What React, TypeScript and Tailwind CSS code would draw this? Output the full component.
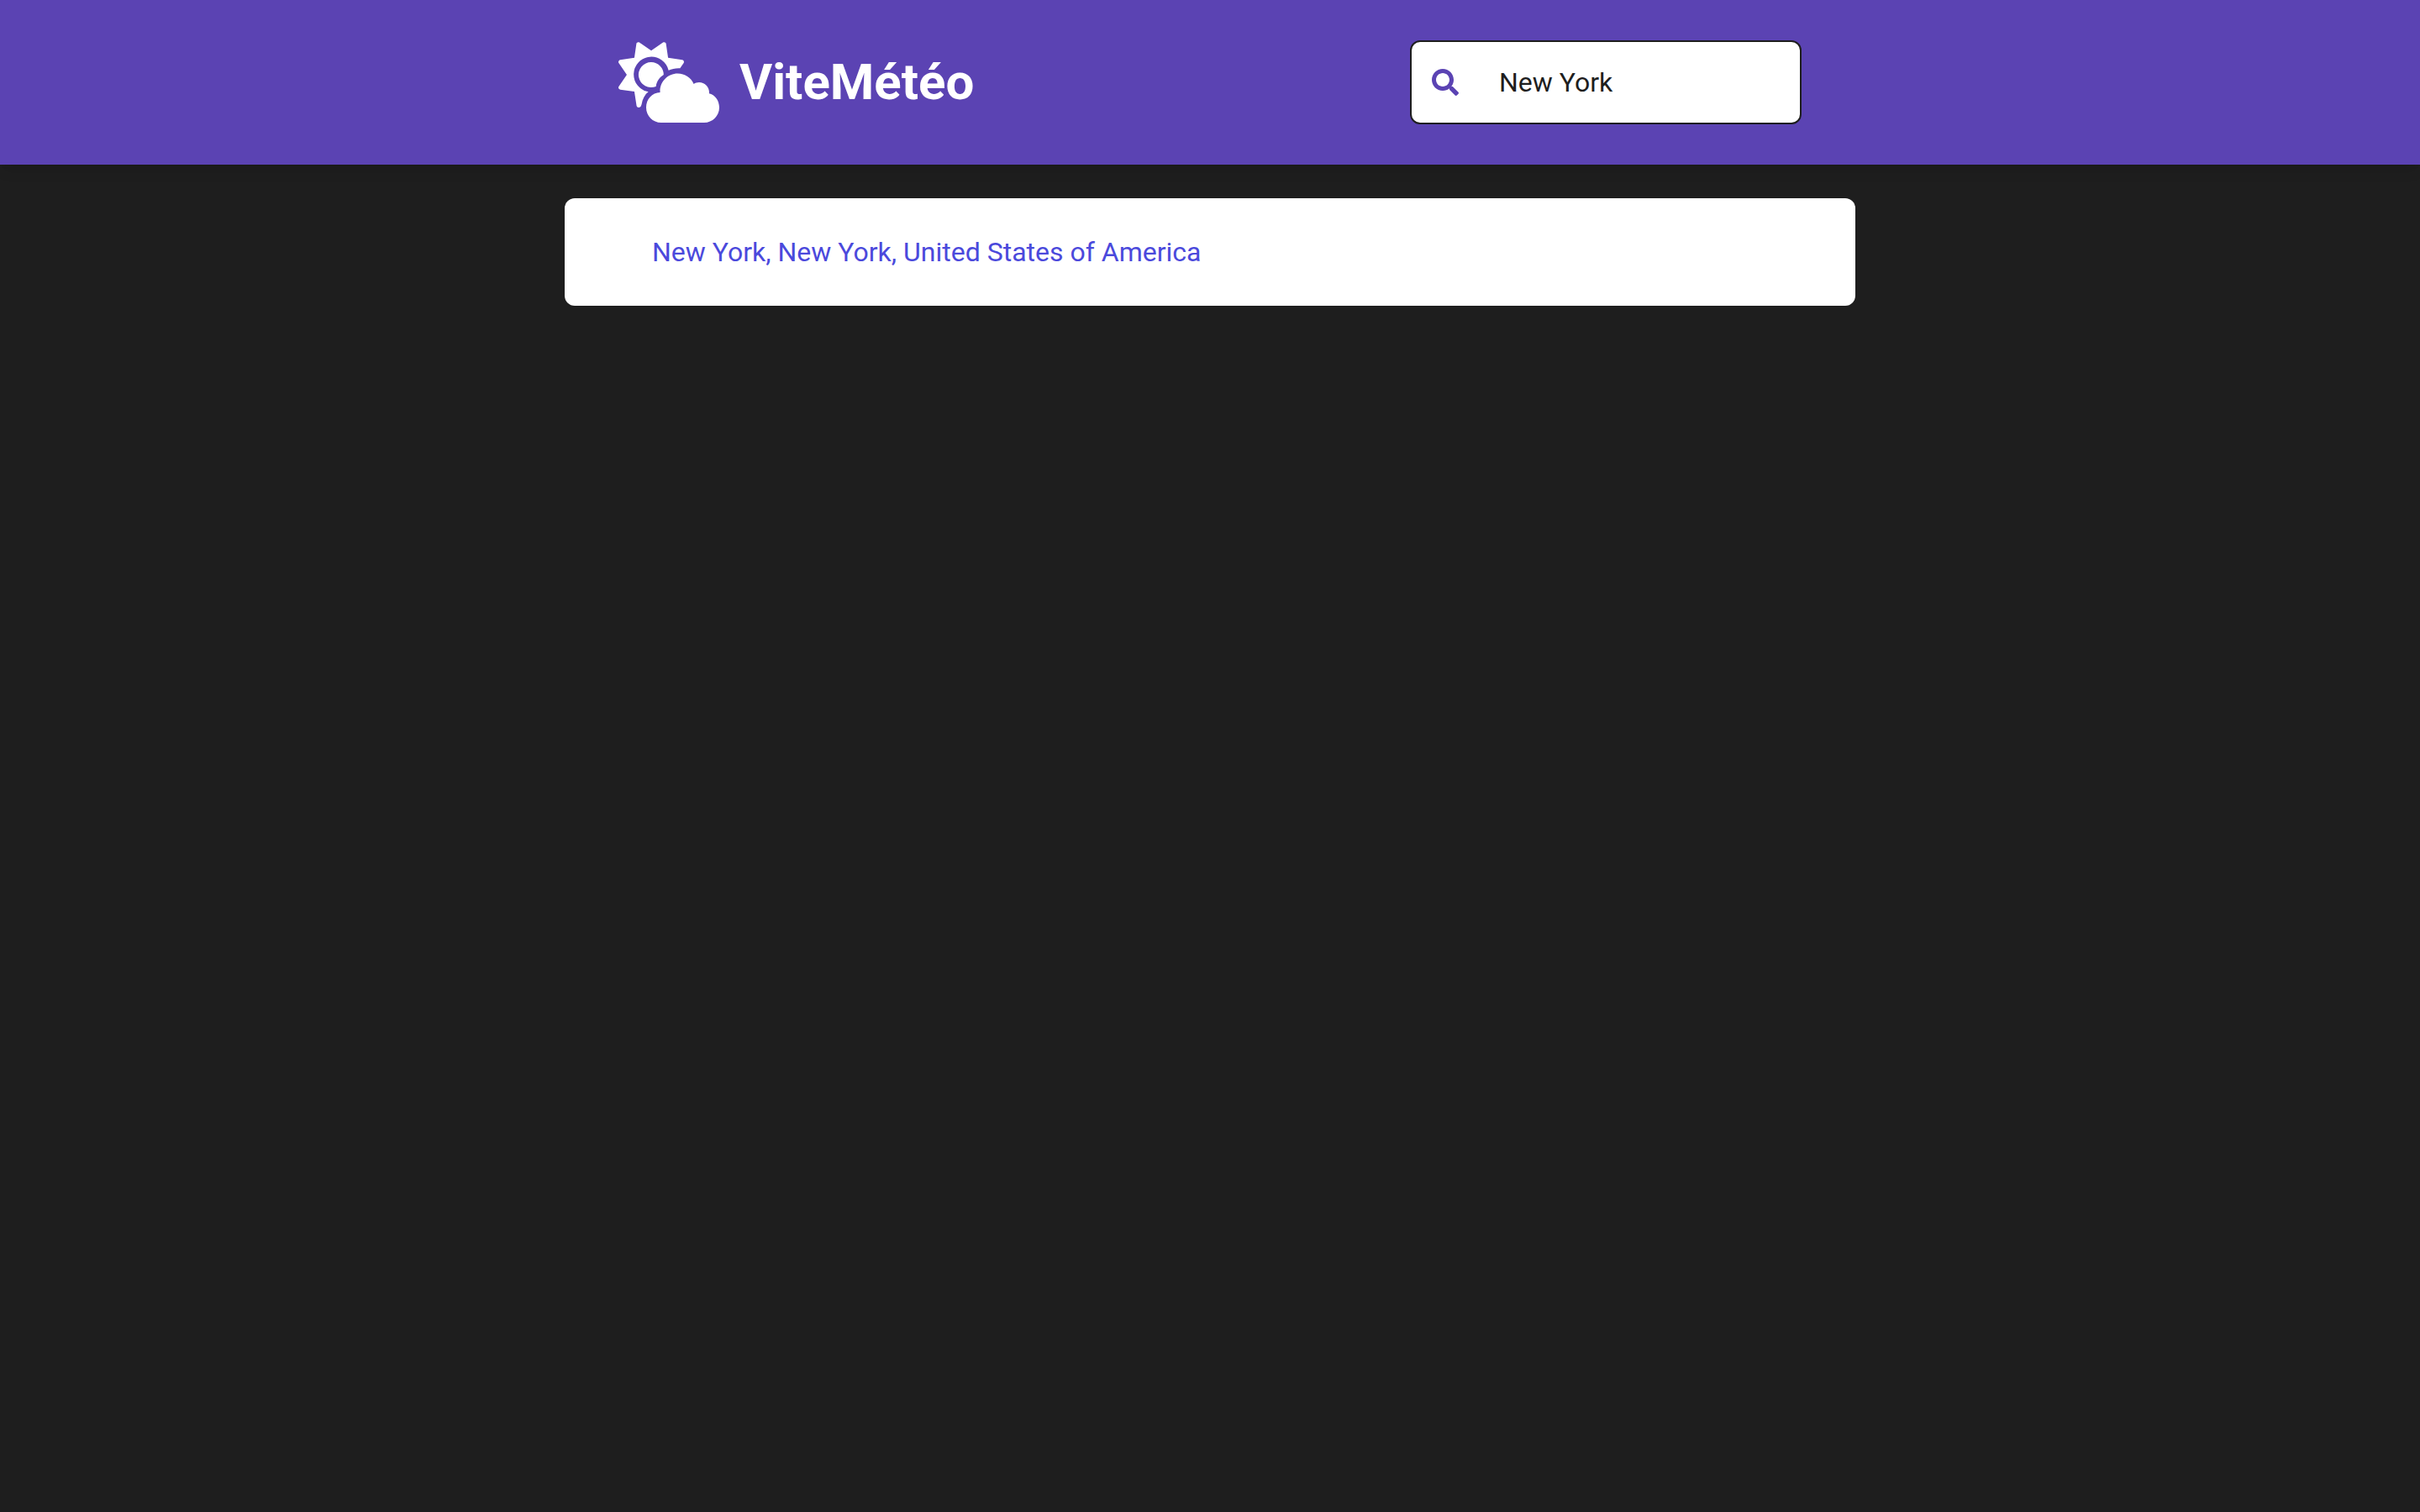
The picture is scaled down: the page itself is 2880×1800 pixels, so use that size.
import { FaSearch } from "react-icons/fa";

function CloudSunIcon({ className }: { className?: string }) {
  return (
    <svg viewBox="0 0 640 512" fill="currentColor" className={className} aria-hidden="true">
      <path d="M133 3L208 55L283 3C290-2 301 2 302 11L315 100L404 113C413 114 419 124 414 133L391 167C366 165 341 170 318 180A112 112 0 1 0 190 316C167 334 152 362 147 396L143 407C138 418 118 419 115 405L101 315L12 302C2 301-3 291 2 283L53 208L2 133C-3 125 2 115 12 113L101 100L114 11C115 2 126-2 133 3Z" />
      <path d="M208 128A80 80 0 0 1 287 208C261 223 243 249 238 282A80 80 0 1 1 208 128Z" />
      <path d="M575 326C576 324 576 322 576 320C576 285 547 256 512 256C499 256 488 260 478 266C461 227 422 200 376 200C314 200 264 250 264 312C264 315 264 317 265 320C213 321 176 364 176 416C176 469 218 512 271 512H544C597 512 640 469 640 416C640 369 612 335 575 326Z" />
    </svg>
  );
}

export default function App() {
  return (
    <div className="min-h-screen bg-[#1e1e1e] font-['Roboto',sans-serif]">
      <header className="bg-[#5b43b3] shadow-lg">
        <div className="mx-auto flex h-49 max-w-384 items-center justify-between px-16">
          <a href="#" className="flex items-center gap-6 text-white">
            <CloudSunIcon className="h-24 w-30" />
            <h1 className="text-[60px] leading-none font-bold">ViteMétéo</h1>
          </a>
          <form className="relative">
            <label htmlFor="city" className="absolute top-0 left-0 flex h-full items-center pl-[26px] text-[#5b43b3]">
              <FaSearch className="size-8" aria-label="Search" />
            </label>
            <input
              id="city"
              type="text"
              defaultValue="New York"
              className="h-25 w-[466px] rounded-xl border-2 border-[#1e1e1e] bg-white pl-26 text-[32px] text-[#1e1e1e]"
            />
          </form>
        </div>
      </header>
      <main className="mx-auto mt-10 max-w-384">
        <ul className="rounded-xl bg-white px-26 py-10">
          <li>
            <a href="#" className="text-[32px] leading-12 text-[#4b49dc]">
              New York, New York, United States of America
            </a>
          </li>
        </ul>
      </main>
    </div>
  );
}
